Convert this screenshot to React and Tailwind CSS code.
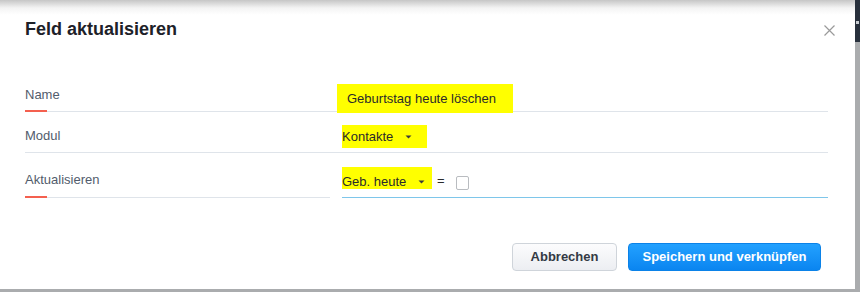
import React from 'react';

function Caret() {
    return (
        <svg width="7" height="4" viewBox="0 0 7 4" className="shrink-0">
            <path d="M0.5 0.5 L6.5 0.5 L3.5 3.5 Z" fill="#3a3a3a" />
        </svg>
    );
}

function FieldLabel({ text, pad, accent }) {
    return (
        <div className={`flex flex-col justify-between h-full ${pad}`}>
            <span className="text-[13px] leading-[16px] text-[#525c6c]">{text}</span>
            {accent ? <span className="block w-[22px] h-[2px] bg-[#f4604f] -mb-[1px]" /> : <span />}
        </div>
    );
}

export default function App() {
    return (
        <div className="w-[860px] h-[292px] flex bg-[#aaacae] font-['Liberation_Sans',Arial,sans-serif]">
            <div className="w-[855px] h-[289px] bg-white flex flex-col">
                {/* Header */}
                <div className="h-[70px] flex items-start justify-between pl-[25px] pr-[20px] pt-[17px] bg-[linear-gradient(to_bottom,#c6c6c6_0px,#f4f4f4_8px,#ffffff_15px)]">
                    <h2 className="text-[18px] leading-[24px] font-bold text-[#1d2128]">Feld aktualisieren</h2>
                    <svg width="11" height="11" viewBox="0 0 11 11" className="mt-[8px]">
                        <path d="M0.5 0.5 L10.5 10.5 M10.5 0.5 L0.5 10.5" stroke="#9a9a9a" strokeWidth="1.2" />
                    </svg>
                </div>

                {/* Form */}
                <div className="flex flex-col pl-[25px] pr-[27px]">
                    <div className="flex h-[42px] border-b border-[#dfe4ea]">
                        <div className="w-[317px]">
                            <FieldLabel text="Name" pad="pt-[17px]" accent />
                        </div>
                        <div className="flex-1">
                            <div className="-ml-[5px] mt-[14px] w-[176px] h-[29px] bg-[#ffff00] pl-[10px] text-[13px] leading-[29px] text-[#2b2b2b]">
                                Geburtstag heute löschen
                            </div>
                        </div>
                    </div>

                    <div className="flex h-[41px] border-b border-[#dfe4ea]">
                        <div className="w-[317px]">
                            <FieldLabel text="Modul" pad="pt-[16px]" />
                        </div>
                        <div className="flex-1">
                            <div className="mt-[13px] w-[85px] h-[23px] bg-[#ffff00] flex items-center gap-[12px] text-[13px] leading-[23px] text-[#2b2b2b]">
                                <span>Kontakte</span>
                                <Caret />
                            </div>
                        </div>
                    </div>

                    <div className="flex h-[45px]">
                        <div className="w-[305px] border-b border-[#dfe4ea]">
                            <FieldLabel text="Aktualisieren" pad="pt-[19px]" accent />
                        </div>
                        <div className="w-[12px]" />
                        <div className="flex-1 border-b border-[#7ec6ea] flex items-start">
                            <div className="mt-[14px] w-[90px] h-[22px] bg-[#ffff00] flex items-start gap-[12px] pt-[5px] text-[13px] leading-[20px] text-[#2b2b2b]">
                                <span>Geb. heute</span>
                                <span className="mt-[8px]"><Caret /></span>
                            </div>
                            <span className="ml-[5px] mt-[20px] text-[13px] leading-[16px] text-[#2b2b2b]">=</span>
                            <span className="ml-[11px] mt-[23px] w-[13px] h-[14px] border border-[#b9bcc0] rounded-[2px] bg-white" />
                        </div>
                    </div>
                </div>

                {/* Footer */}
                <div className="flex justify-end gap-[11px] mt-[45px] pr-[34px]">
                    <button className="w-[105px] h-[28px] rounded-[4px] border border-[#cfd4da] bg-linear-to-b from-[#fcfcfd] to-[#eceef2] text-[13px] font-bold text-[#333a44]">
                        Abbrechen
                    </button>
                    <button className="w-[193px] h-[28px] rounded-[4px] border border-[#0b82e8] bg-linear-to-b from-[#22a1ff] to-[#0a85f0] text-[13px] font-bold text-white">
                        Speichern und verknüpfen
                    </button>
                </div>
            </div>

            {/* Right edge strip */}
            <div className="w-[5px] flex flex-col">
                <div className="h-[42px] bg-[#28303c] pt-[21px] pl-[1px]">
                    <div className="w-[3px] h-[3px] bg-[#c9cdd2]" />
                </div>
            </div>
        </div>
    );
}
